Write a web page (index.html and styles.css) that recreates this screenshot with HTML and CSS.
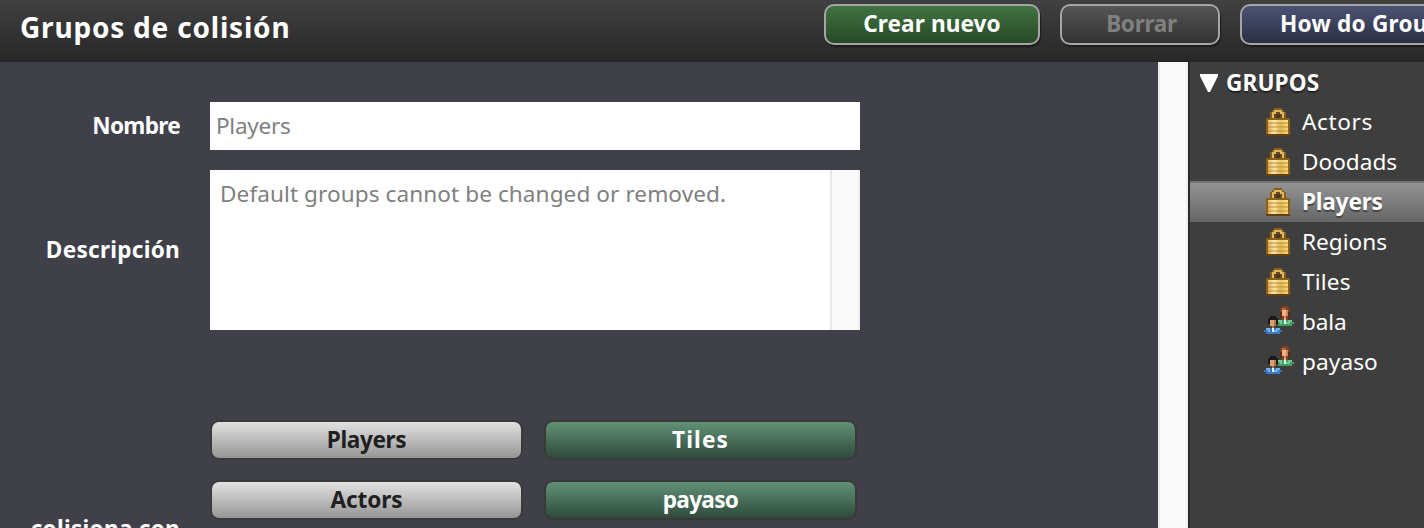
FILE: index.html
```html
<!DOCTYPE html>
<html lang="es">
<head>
<meta charset="utf-8">
<title>Grupos de colisión</title>
<link rel="stylesheet" href="styles.css">
</head>
<body>
<svg class="defs" width="0" height="0" aria-hidden="true">
  <defs>
    <linearGradient id="gold"><stop offset="0" stop-color="#dca94e"/><stop offset=".3" stop-color="#fae7aa"/><stop offset=".6" stop-color="#e0b45a"/><stop offset="1" stop-color="#fbdb69"/></linearGradient>
    <symbol id="lock" viewBox="0 0 12 14" shape-rendering="crispEdges">
      <path fill="#8a6018" d="M4 0h4v1h1v1h1v3h2v9H0V5h2V2h1V1h1z"/>
      <path fill="#d9b765" d="M4 1h4v1h1v3H8V3H7V2H5v1H4v2H3V2h1z"/>
      <path fill="#704a12" d="M4 3h1V2h2v1h1v2H4z"/>
      <path fill="#3f3a30" d="M5 3h2v2H5z"/>
      <path fill="url(#gold)" d="M1 6h10v7H1z"/>
      <path fill="#bd8d38" opacity=".5" d="M1 7h10v1H1zM1 9h10v1H1zM1 11h10v1H1z"/>
      <path fill="#fff0b0" opacity=".4" d="M1 6h10v1H1z"/>
      <path fill="#63400c" d="M0 13h12v1H0z"/>
    </symbol>
    <symbol id="people" viewBox="0 0 15 14" shape-rendering="crispEdges">
      <path fill="#80421d" d="M9 0h3v1h1v5h-1v1H9V6H8V1h1z"/>
      <path fill="#64260f" d="M8 3h1v3H8zM12 3h1v3h-1z"/>
      <path fill="#ac6a3e" d="M9 1h2v1H9z"/>
      <path fill="#e8b58a" d="M9 2h2v3H9zM10 5h1v2h-1z"/>
      <path fill="#c8875c" d="M11 2h1v3h-1zM10 5h1v1h-1z"/>
      <path fill="#3f9d66" d="M7 7h7v1h1v1h-1v1H7V9H6V8h1z"/>
      <path fill="#71ca93" d="M7 7h2v1H7zM12 7h2v1h-2zM8 8h1v1H8zM11 8h2v1h-2z"/>
      <path fill="#e5f5e6" d="M10 7h1v2h-1z"/>
      <path fill="#1d1718" d="M3 5h3v1h1v3H6V7H3v2H2V6h1z"/>
      <path fill="#daa06f" d="M3 7h3v3H3zM4 10h1v1H4z"/>
      <path fill="#b87346" d="M5 7h1v3H5zM4 10h1v1H4z"/>
      <path fill="#3978bd" d="M1 11h7v1h1v1H8v1H1v-1H0v-1h1z"/>
      <path fill="#73b2ed" d="M1 11h2v1H1zM6 11h2v1H6zM2 12h1v1H2zM5 12h2v1H5z"/>
      <path fill="#eef4fa" d="M4 11h1v2H4z"/>
    </symbol>
  </defs>
</svg>
<div class="app">
  <header class="toolbar">
    <h1 class="title"><span class="t-title">Grupos de colisión</span></h1>
    <button class="tool tool-create"><span class="t-create">Crear nuevo</span></button>
    <button class="tool tool-delete"><span class="t-delete">Borrar</span></button>
    <button class="tool tool-help"><span class="t-help">How do Grou</span></button>
  </header>
  <div class="body">
    <main class="editor">
      <div class="row"><label class="label"><span class="t-name">Nombre</span></label><div class="input"><span class="t-input">Players</span></div></div>
      <div class="row row-desc"><label class="label"><span class="t-desc">Descripción</span></label>
        <div class="area"><p class="area-text"><span class="t-default">Default groups cannot be changed or removed.</span></p><div class="area-track"></div></div></div>
      <div class="row row-collide"><label class="label label-collide"><span class="t-collide">colisiona con</span></label>
        <div class="grid">
          <button class="group off"><span class="t-bplayers">Players</span></button><button class="group on"><span class="t-btiles">Tiles</span></button>
          <button class="group off"><span class="t-bactors">Actors</span></button><button class="group on"><span class="t-bpayaso">payaso</span></button>
        </div></div>
    </main>
    <div class="track"></div>
    <aside class="side">
      <div class="side-head"><svg class="arrow" viewBox="0 0 18 18"><path d="M0 0h18v2l-8 16H8L0 2z"/></svg><span class="t-groups">GRUPOS</span></div>
      <div class="item"><svg class="icon"><use href="#lock"/></svg><span class="t-actors">Actors</span></div>
      <div class="item"><svg class="icon"><use href="#lock"/></svg><span class="t-doodads">Doodads</span></div>
      <div class="item selected"><svg class="icon"><use href="#lock"/></svg><span class="t-players">Players</span></div>
      <div class="item"><svg class="icon"><use href="#lock"/></svg><span class="t-regions">Regions</span></div>
      <div class="item"><svg class="icon"><use href="#lock"/></svg><span class="t-tiles">Tiles</span></div>
      <div class="item"><svg class="icon icon-people"><use href="#people"/></svg><span class="t-bala">bala</span></div>
      <div class="item"><svg class="icon icon-people"><use href="#people"/></svg><span class="t-payaso">payaso</span></div>
    </aside>
  </div>
</div>
</body>
</html>
```
FILE: styles.css
```css
* { box-sizing: border-box; }
body { margin: 0; width: 1424px; height: 528px; overflow: hidden; background: #404049; color: #fff; font: 22.6px/40px "Noto Sans", "Open Sans", sans-serif; }
.defs { position: absolute; }
.app { width: 1424px; height: 528px; overflow: hidden; display: flex; flex-direction: column; white-space: nowrap; }
.toolbar { height: 62px; flex: none; display: flex; gap: 20px; padding: 4px 0 0 20px; background: linear-gradient(#404040, #282828 95%, #242424); }
.title { width: 784px; margin: 0; flex: none; font-size: 28px; line-height: 47px; font-weight: 700; }
.tool { flex: none; height: 41px; padding: 0 0 2px; border: 2px solid #a5a5a5; border-radius: 10px; font: 700 22.6px/35px "Noto Sans", "Open Sans", sans-serif; color: #fff; box-shadow: 1px 2px 1px #1c1c1c; background-origin: border-box; }
.tool-create { width: 216px; background-image: linear-gradient(#427642, #264626); }
.tool-delete { width: 160px; padding-left: 3px; background-image: linear-gradient(#575757, #303030); color: #808080; }
.tool-help { width: 350px; padding-left: 38px; text-align: left; background-image: linear-gradient(#4d5576, #2a2d42); }
.body { display: flex; flex: 1; min-height: 0; }
.editor { width: 1158px; padding-top: 40px; display: flex; flex-direction: column; gap: 20px; }
.row { display: flex; gap: 30px; height: 48px; align-items: center; flex: none; }
.row-desc { height: 160px; }
.row-collide { height: 220px; margin-top: 70px; align-items: flex-start; }
.label { width: 180px; text-align: right; font-weight: 700; padding-bottom: 1px; }
.label-collide { padding-top: 89px; }
.input { width: 650px; height: 48px; padding-left: 6px; line-height: 47px; background: #fff; color: #808080; }
.area { width: 650px; height: 160px; display: flex; background: #fff; color: #808080; }
.area-text { width: 620px; margin: 0; padding: 3px 0 0 10px; line-height: 41px; }
.area-track { width: 30px; background: #fafafa; border-left: 2px solid #e7e7e7; border-right: 2px solid #f0f0f0; }
.grid { display: grid; grid-template-columns: 313px 313px; gap: 20px 21px; }
.group { height: 40px; padding: 0 0 1px; border: 2px solid #3a3a39; border-radius: 9px; font: 700 22.6px/35px "Noto Sans", "Open Sans", sans-serif; background-origin: border-box; }
.off { background-image: linear-gradient(#e6e6e6, #919191); color: #202020; }
.on { background-image: linear-gradient(#63967a, #2c4638); color: #fff; }
.track { width: 30px; background: #fafafa; border-left: 2px solid #ececec; border-right: 2px solid #f0f0f0; }
.side { width: 236px; border-left: 2px solid #2a2a2a; background: #3e3e3e; }
.side-head { height: 40px; padding-left: 10px; display: flex; align-items: center; gap: 8px; font-weight: 700; line-height: 39px; text-shadow: 0 2px 1px #222; }
.arrow { width: 18px; height: 18px; margin-top: 2px; fill: #fff; }
.item { height: 40px; padding-left: 73px; display: flex; align-items: center; gap: 9px; }
.item span { line-height: 38px; padding-bottom: 1px; }
.icon { width: 30px; height: 28px; }
.icon-people { transform: translate(1px, -2px); }
.selected { background: linear-gradient(#949494, #666); box-shadow: 0 -1px #747474, inset 0 1px #747474; font-weight: 700; text-shadow: 0 2px 1px #444; }

/* Tracking per label */
.t-title { letter-spacing: .8px; }
.t-create { letter-spacing: .1px; }
.t-delete { letter-spacing: -.3px; }
.t-help { letter-spacing: .22px; }
.t-name { letter-spacing: -.7px; }
.t-input { letter-spacing: -.3px; }
.t-desc { letter-spacing: .25px; }
.t-default { letter-spacing: .07px; }
.t-collide { letter-spacing: .25px; }
.t-bplayers { letter-spacing: -.4px; }
.t-btiles { letter-spacing: 1.1px; }
.t-bactors { letter-spacing: -.1px; }
.t-bpayaso { letter-spacing: -.7px; }
.t-groups { letter-spacing: .1px; }
.t-actors { letter-spacing: .6px; }
.t-doodads { letter-spacing: 0; }
.t-players { letter-spacing: -.2px; }
.t-regions { letter-spacing: 0; }
.t-tiles { letter-spacing: .2px; }
.t-bala { letter-spacing: -.1px; }
.t-payaso { letter-spacing: .1px; }
```
